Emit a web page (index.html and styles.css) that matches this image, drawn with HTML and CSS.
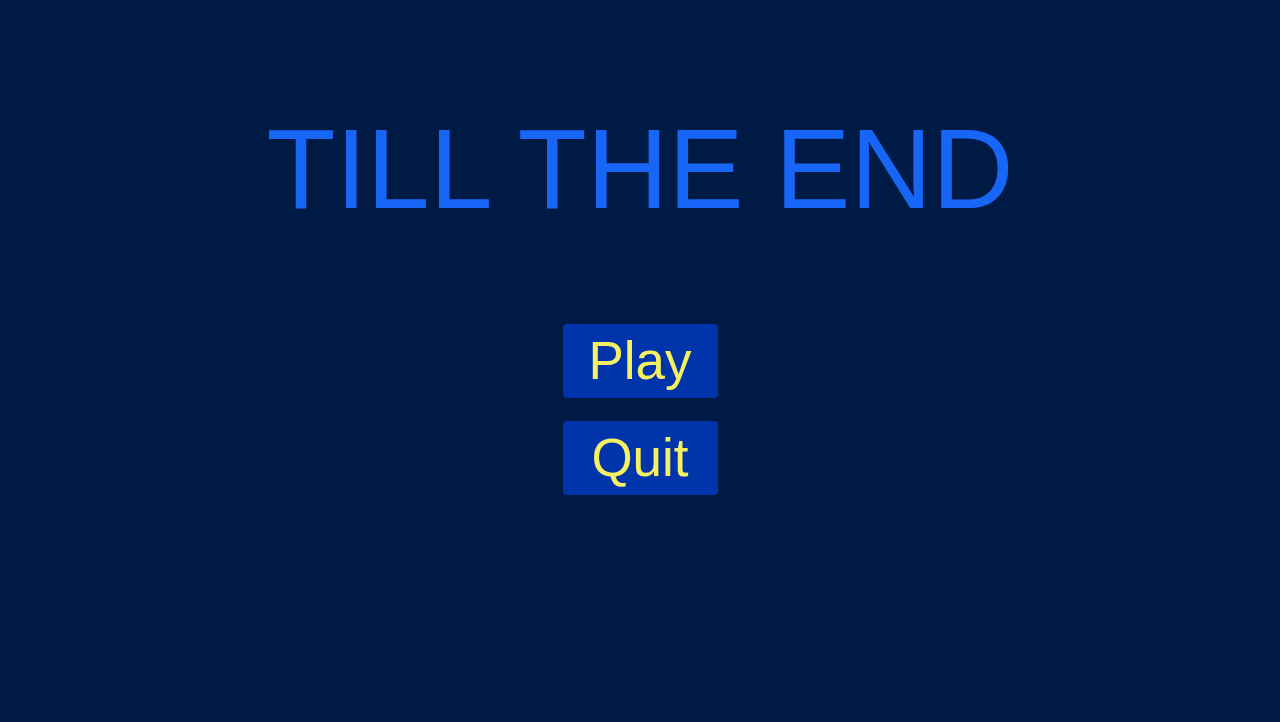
FILE: index.html
```html
<!DOCTYPE html>
<html>
<head>
<meta charset="utf-8">
<link rel="stylesheet" href="styles.css">
</head>
<body>
<main class="menu">
  <h1 class="title">TILL THE END</h1>
  <div class="buttons">
    <button class="btn">Play</button>
    <button class="btn">Quit</button>
  </div>
</main>
</body>
</html>
```
FILE: styles.css
```css
html, body {
  margin: 0;
  padding: 0;
  height: 100%;
}
body {
  background: #001a46;
  font-family: "Liberation Sans", Arial, sans-serif;
  overflow: hidden;
}
.menu {
  display: flex;
  flex-direction: column;
  align-items: center;
  padding-top: 113px;
}
.title {
  margin: 0;
  font-size: 113px;
  line-height: 1;
  font-weight: normal;
  color: #1866f8;
}
.buttons {
  margin-top: 98px;
  display: flex;
  flex-direction: column;
  gap: 23px;
}
.btn {
  width: 155px;
  height: 74px;
  border: none;
  border-radius: 4px;
  background: #0034aa;
  color: #f4f062;
  font-family: "Liberation Sans", Arial, sans-serif;
  font-size: 53px;
  line-height: 74px;
  padding: 0;
  cursor: pointer;
}
```
